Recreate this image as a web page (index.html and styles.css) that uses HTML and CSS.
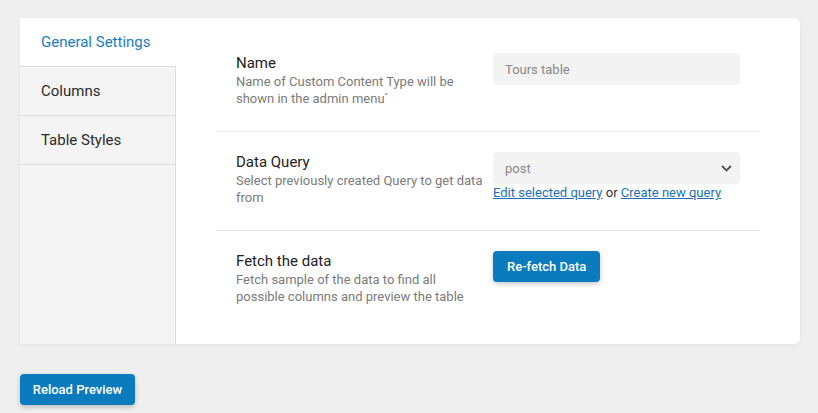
FILE: index.html
```html
<!DOCTYPE html>
<html>
<head>
<meta charset="utf-8">
<link rel="stylesheet" href="styles.css">
</head>
<body>
<div class="page">
  <div class="card">
    <div class="sidebar">
      <div class="tab active">General Settings</div>
      <div class="tab">Columns</div>
      <div class="tab">Table Styles</div>
    </div>
    <div class="content">
      <div class="row">
        <div class="info">
          <div class="label">Name</div>
          <div class="desc">Name of Custom Content Type will be shown in the admin menu`</div>
        </div>
        <div class="control">
          <div class="input">Tours table</div>
        </div>
      </div>
      <div class="row">
        <div class="info">
          <div class="label">Data Query</div>
          <div class="desc">Select previously created Query to get data from</div>
        </div>
        <div class="control">
          <div class="input select">post
            <svg class="chev" width="11" height="7" viewBox="0 0 11 7"><path d="M1 1 L5.5 5.5 L10 1" fill="none" stroke="#555" stroke-width="1.8"/></svg>
          </div>
          <div class="links"><a href="#">Edit selected query</a> or <a href="#">Create new query</a></div>
        </div>
      </div>
      <div class="row">
        <div class="info">
          <div class="label">Fetch the data</div>
          <div class="desc">Fetch sample of the data to find all possible columns and preview the table</div>
        </div>
        <div class="control">
          <button class="btn">Re-fetch Data</button>
        </div>
      </div>
    </div>
  </div>
  <div class="footer">
    <button class="btn reload">Reload Preview</button>
  </div>
</div>
</body>
</html>
```
FILE: styles.css
```css
* { box-sizing: border-box; }
html, body { margin: 0; padding: 0; }
body {
  background: #efefef;
  font-family: Roboto, "Liberation Sans", sans-serif;
  width: 818px;
  height: 413px;
  overflow: hidden;
}
.page {
  padding: 18px 18px 0 20px;
}
.card {
  display: flex;
  background: #fff;
  height: 326px;
  border-radius: 0 6px 6px 0;
  box-shadow: 0 1px 4px rgba(0,0,0,0.06);
}
.sidebar {
  width: 156px;
  flex: none;
  background: #f4f4f4;
  border-right: 1px solid #dddddd;
  display: flex;
  flex-direction: column;
}
.tab {
  height: 49px;
  padding: 0 0 0 21px;
  display: flex;
  align-items: center;
  font-size: 15px;
  color: #2b2b2b;
  border-bottom: 1px solid #dddddd;
}
.tab.active {
  background: #fff;
  color: #1a7cc0;
  margin-right: -1px;
  align-items: flex-start;
  padding-top: 15px;
}
.content {
  flex: 1;
  padding: 15px 40px 0 40px;
}
.row {
  display: grid;
  grid-template-columns: 1fr 247px;
  column-gap: 10px;
  padding: 20px 20px 0 20px;
  height: 99px;
  border-bottom: 1px solid #e6e6e6;
}
.row:last-child { border-bottom: none; }
.label {
  font-size: 15px;
  line-height: 18px;
  color: #222;
  margin-top: 1px;
}
.desc {
  font-size: 13px;
  line-height: 17px;
  color: #7b7b7b;
  margin-top: 1px;
}
.input {
  height: 32px;
  background: #f3f3f3;
  border-radius: 4px;
  font-size: 13px;
  color: #888;
  padding: 0 12px;
  display: flex;
  align-items: center;
  justify-content: space-between;
}
.select { padding-right: 8px; }
.links {
  font-size: 13px;
  line-height: 16px;
  color: #333;
  margin-top: 1px;
}
.links a { color: #1c6fb8; }
.btn {
  background: #0a7cbd;
  color: #fff;
  border: none;
  border-radius: 4px;
  height: 31px;
  padding: 0 14px;
  font-family: Roboto, "Liberation Sans", sans-serif;
  font-size: 13px;
  font-weight: 500;
  white-space: nowrap;
  box-shadow: 0 2px 5px rgba(0,0,0,0.22);
}
.footer {
  padding-top: 30px;
}
.reload { height: 31px; width: 115px; padding: 0; }
```
